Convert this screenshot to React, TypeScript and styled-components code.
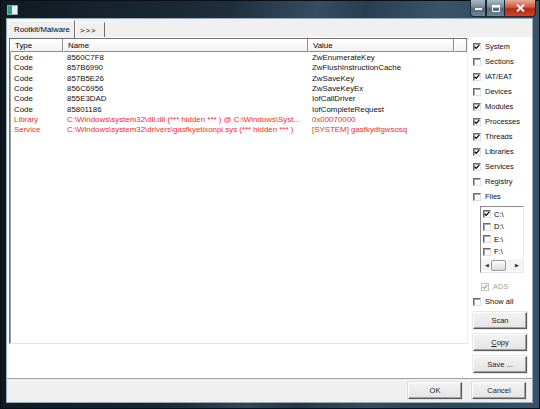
import styled, { createGlobalStyle } from 'styled-components';

const GlobalStyle = createGlobalStyle`
  html, body { margin: 0; padding: 0; }
  body {
    width: 540px;
    height: 409px;
    overflow: hidden;
    font-family: "Liberation Sans", Arial, sans-serif;
    font-size: 7.5px;
    color: #000;
  }
`;

const Window = styled.div`
  width: 540px;
  height: 409px;
  box-sizing: border-box;
  display: flex;
  flex-direction: column;
  padding: 0 8px 7px 7px;
  background:
    linear-gradient(100deg, rgba(255,255,255,0) 38%, rgba(120,160,190,0.2) 52%, rgba(255,255,255,0) 60%, rgba(120,160,190,0.15) 72%, rgba(255,255,255,0) 80%),
    linear-gradient(90deg, #101a22 0%, #1b2a36 35%, #2b4356 75%, #35546b 100%);
  box-shadow: inset 0 0 0 1px #0a1016;
`;

const TitleBar = styled.div`
  height: 19px;
  display: flex;
  align-items: flex-start;
  justify-content: space-between;
  margin-right: -4px;
`;

const AppIcon = styled.div`
  width: 9px;
  height: 8px;
  margin: 5px 0 0 0;
  background: linear-gradient(90deg, #2f9a7d 0 45%, #e9eef0 45% 100%);
  border: 1px solid #8aa6b0;
`;

const Controls = styled.div`
  display: flex;
  height: 17px;
`;

const CtrlButton = styled.div<{ $w: number; $close?: boolean }>`
  width: ${({ $w }) => $w}px;
  height: 17px;
  box-sizing: border-box;
  display: flex;
  align-items: center;
  justify-content: center;
  border: 1px solid #1c2a33;
  border-top: none;
  border-left-width: ${({ $close }) => ($close ? 0 : 1)}px;
  border-radius: ${({ $close }) => ($close ? '0 0 4px 0' : '0')};
  background: ${({ $close }) =>
    $close
      ? 'linear-gradient(180deg, #e9a99a 0%, #d4553c 45%, #b52a14 55%, #c9452a 100%)'
      : 'linear-gradient(180deg, #a9b9c5 0%, #74899a 45%, #55697a 55%, #6f8696 100%)'};
  &:first-child { border-radius: 0 0 0 4px; }
`;

const Client = styled.div`
  flex: 1;
  display: flex;
  flex-direction: column;
  background: #f0f0f0;
  box-shadow: 0 0 0 1px #9aabb8;
`;

const TabStrip = styled.div`
  height: 18px;
  display: flex;
  align-items: flex-end;
  padding-left: 1px;
`;

const Tab = styled.div<{ $active?: boolean }>`
  box-sizing: border-box;
  height: ${({ $active }) => ($active ? 18 : 15)}px;
  padding: 0 4px;
  display: flex;
  align-items: center;
  background: #f0f0f0;
  border-top: 1px solid #fff;
  border-left: 1px solid #fff;
  border-right: 1px solid #6f6f6f;
  font-size: 7.8px;
  ${({ $active }) => ($active ? 'margin-bottom: -1px; z-index: 1; padding-left: 5px;' : 'padding-right: 7px; letter-spacing: 1px;')}
`;

const TabPage = styled.div`
  flex: 1;
  display: flex;
  background: #fff;
  border-top: 1px solid #fff;
  padding: 0 5px 0 2px;
  gap: 4px;
`;

const ListView = styled.div`
  width: 459px;
  height: 306px;
  box-sizing: border-box;
  border: 1px solid;
  border-color: #6e6e6e #f0f0f0 #e2e2e2 #6e6e6e;
  box-shadow: inset 1px 1px 0 #a0a0a0;
  display: flex;
  flex-direction: column;
  font-size: 7.9px;
`;

const Header = styled.div`
  display: flex;
  height: 13px;
  flex-shrink: 0;
`;

const HeaderCell = styled.div<{ $w?: number }>`
  box-sizing: border-box;
  ${({ $w }) => ($w ? `width: ${$w}px;` : 'flex: 1;')}
  padding-left: 4px;
  display: flex;
  align-items: center;
  background: linear-gradient(180deg, #ffffff 0%, #f2f2f2 100%);
  border-left: 1px solid #fff;
  border-right: 1px solid #8c8c8c;
  border-bottom: 1px solid #8c8c8c;
`;

const Rows = styled.div`
  padding-top: 1px;
`;

const Row = styled.div<{ $alert?: boolean }>`
  display: flex;
  height: 10.35px;
  line-height: 10.35px;
  color: ${({ $alert }) => ($alert ? '#f42a2a' : '#111')};
  white-space: nowrap;
`;

const Cell = styled.div<{ $w: number }>`
  width: ${({ $w }) => $w}px;
  padding-left: 4px;
  box-sizing: border-box;
  overflow: hidden;
`;

const SidePanel = styled.div`
  width: 55px;
  display: flex;
  flex-direction: column;
  padding-top: 1px;
`;

const CheckRow = styled.label<{ $indent?: number; $disabled?: boolean }>`
  height: 15px;
  display: flex;
  align-items: center;
  gap: 4px;
  padding-left: ${({ $indent }) => $indent ?? 1}px;
  color: ${({ $disabled }) => ($disabled ? '#a0a0a0' : '#111')};
  white-space: nowrap;
`;

const Box = styled.span<{ $disabled?: boolean }>`
  width: 8px;
  height: 8px;
  box-sizing: border-box;
  display: inline-flex;
  align-items: center;
  justify-content: center;
  background: #fff;
  border: 1px solid;
  border-color: ${({ $disabled }) => ($disabled ? '#c0c0c0' : '#6a6a6a #e0e0e0 #e0e0e0 #6a6a6a')};
  box-shadow: ${({ $disabled }) => ($disabled ? 'none' : 'inset 1px 1px 0 #a8a8a8')};
  flex-shrink: 0;
`;

const DriveBox = styled.div`
  margin: 2px 3px 6px 8px;
  height: 67px;
  box-sizing: border-box;
  border: 1px solid;
  border-color: #8a8a8a #e8e8e8 #e8e8e8 #8a8a8a;
  display: flex;
  flex-direction: column;
  padding-top: 1px;
`;

const DriveRow = styled.div`
  height: 12.5px;
  display: flex;
  align-items: center;
  gap: 3px;
  padding-left: 2px;
`;

const HScroll = styled.div`
  margin-top: 1px;
  height: 12px;
  display: flex;
  align-items: center;
  justify-content: space-between;
  padding: 0 4px;
  background: #f4f4f4;
  font-size: 5px;
  color: #333;
`;

const Thumb = styled.div`
  width: 13px;
  height: 9px;
  margin-right: 8px;
  border: 1px solid #9a9a9a;
  border-radius: 2px;
  background: linear-gradient(180deg, #fafafa, #dcdcdc);
`;

const Button = styled.div`
  width: 54px;
  height: 17px;
  box-sizing: border-box;
  display: flex;
  align-items: center;
  justify-content: center;
  background: linear-gradient(180deg, #f2f2f2 0%, #e4e4e4 100%);
  border: 1px solid;
  border-color: #ffffff #5a5a5a #5a5a5a #ffffff;
  box-shadow: inset -1px -1px 0 #a0a0a0, 0 0 0 0.5px #d0d0d0;
  font-size: 7.5px;
  color: #222;
  u { text-decoration: underline; }
`;

const ButtonStack = styled.div`
  display: flex;
  flex-direction: column;
  gap: 5px;
  margin-top: 3px;
  padding-left: 1px;
`;

const Footer = styled.div`
  height: 24px;
  box-sizing: border-box;
  display: flex;
  justify-content: flex-end;
  gap: 10px;
  padding: 3px 6px 0 0;
  border-top: 1px solid #a0a0a0;
`;

const Check = ({ color = '#000' }: { color?: string }) => (
  <svg width="6" height="6" viewBox="0 0 7 7">
    <path d="M0.8 3.2 L2.6 5.2 L6.2 0.9" fill="none" stroke={color} strokeWidth="1.4" />
  </svg>
);

const CheckBox = ({ checked, disabled }: { checked?: boolean; disabled?: boolean }) => (
  <Box $disabled={disabled}>{checked && <Check color={disabled ? '#a0a0a0' : '#000'} />}</Box>
);

const rows = [
  { type: 'Code', name: '8560C7F8', value: 'ZwEnumerateKey' },
  { type: 'Code', name: '857B6990', value: 'ZwFlushInstructionCache' },
  { type: 'Code', name: '857B5E26', value: 'ZwSaveKey' },
  { type: 'Code', name: '856C6956', value: 'ZwSaveKeyEx' },
  { type: 'Code', name: '855E3DAD', value: 'IofCallDriver' },
  { type: 'Code', name: '85801186', value: 'IofCompleteRequest' },
  {
    type: 'Library',
    name: 'C:\\Windows\\system32\\dll.dll (*** hidden *** ) @ C:\\Windows\\Syst...',
    value: '0x00070000',
    alert: true,
  },
  {
    type: 'Service',
    name: 'C:\\Windows\\system32\\drivers\\gasfkyetixonpi.sys (*** hidden *** )',
    value: '[SYSTEM] gasfkydtgwsosq',
    alert: true,
  },
];

const options = [
  { label: 'System', checked: true },
  { label: 'Sections', checked: false },
  { label: 'IAT/EAT', checked: true },
  { label: 'Devices', checked: false },
  { label: 'Modules', checked: true },
  { label: 'Processes', checked: true },
  { label: 'Threads', checked: true },
  { label: 'Libraries', checked: true },
  { label: 'Services', checked: true },
  { label: 'Registry', checked: false },
  { label: 'Files', checked: false },
];

const drives = [
  { label: 'C:\\', checked: true },
  { label: 'D:\\', checked: false },
  { label: 'E:\\', checked: false },
  { label: 'F:\\', checked: false },
];

export default function App() {
  return (
    <>
      <GlobalStyle />
      <Window>
        <TitleBar>
          <AppIcon />
          <Controls>
            <CtrlButton $w={16}>
              <svg width="7" height="3"><rect width="7" height="2" y="1" fill="#fff" /></svg>
            </CtrlButton>
            <CtrlButton $w={19}>
              <svg width="8" height="7"><rect x="0.5" y="0.5" width="7" height="6" fill="none" stroke="#fff" /><rect x="0.5" y="0.5" width="7" height="2" fill="#fff" /></svg>
            </CtrlButton>
            <CtrlButton $w={31} $close>
              <svg width="9" height="8" viewBox="0 0 9 8"><path d="M1 0.5 L8 7.5 M8 0.5 L1 7.5" stroke="#fff" strokeWidth="1.8" /></svg>
            </CtrlButton>
          </Controls>
        </TitleBar>
        <Client>
          <TabStrip>
            <Tab $active>Rootkit/Malware</Tab>
            <Tab>&gt;&gt;&gt;</Tab>
          </TabStrip>
          <TabPage>
            <ListView>
              <Header>
                <HeaderCell $w={53}>Type</HeaderCell>
                <HeaderCell $w={245}>Name</HeaderCell>
                <HeaderCell $w={146}>Value</HeaderCell>
                <HeaderCell />
              </Header>
              <Rows>
                {rows.map((r, i) => (
                  <Row key={i} $alert={r.alert}>
                    <Cell $w={53}>{r.type}</Cell>
                    <Cell $w={245}>{r.name}</Cell>
                    <Cell $w={146}>{r.value}</Cell>
                  </Row>
                ))}
              </Rows>
            </ListView>
            <SidePanel>
              {options.map((o) => (
                <CheckRow key={o.label}>
                  <CheckBox checked={o.checked} />
                  {o.label}
                </CheckRow>
              ))}
              <DriveBox>
                {drives.map((d) => (
                  <DriveRow key={d.label}>
                    <CheckBox checked={d.checked} />
                    {d.label}
                  </DriveRow>
                ))}
                <HScroll>
                  <span>◀</span>
                  <Thumb />
                  <span>▶</span>
                </HScroll>
              </DriveBox>
              <CheckRow $indent={9} $disabled>
                <CheckBox checked disabled />
                ADS
              </CheckRow>
              <CheckRow>
                <CheckBox />
                Show all
              </CheckRow>
              <ButtonStack>
                <Button>Scan</Button>
                <Button><u>C</u>opy</Button>
                <Button>Save ...</Button>
              </ButtonStack>
            </SidePanel>
          </TabPage>
          <Footer>
            <Button>OK</Button>
            <Button>Cancel</Button>
          </Footer>
        </Client>
      </Window>
    </>
  );
}
